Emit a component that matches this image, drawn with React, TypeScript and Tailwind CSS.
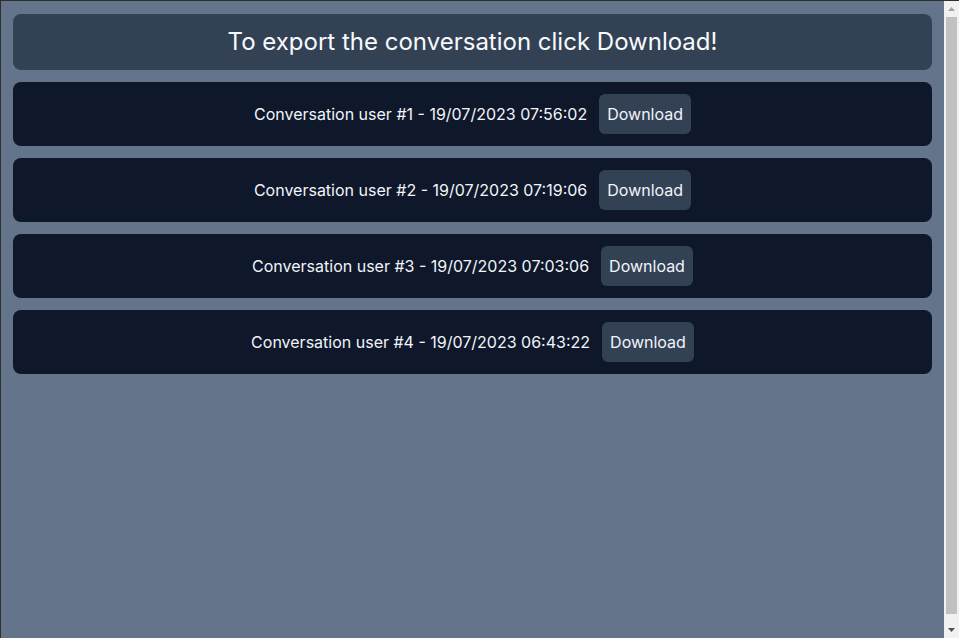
import React from "react";

const rows = [
  "Conversation user #1 - 19/07/2023 07:56:02",
  "Conversation user #2 - 19/07/2023 07:19:06",
  "Conversation user #3 - 19/07/2023 07:03:06",
  "Conversation user #4 - 19/07/2023 06:43:22",
];

export default function App() {
  return (
    <div
      className="flex h-[638px] border-t border-l border-[#2f2f2f] text-[#f1f5f9] overflow-hidden"
      style={{ fontFamily: "Inter, 'Noto Sans', sans-serif" }}
    >
      <div className="flex-1 bg-[#64748b]">
        <div className="flex flex-col gap-3 pt-[13px] px-3 pb-3">
          <div className="rounded-lg bg-[#334155] py-3 text-center text-2xl text-[#f8fafc]">
            To export the conversation click Download!
          </div>
          {rows.map((r) => (
            <div
              key={r}
              className="flex items-center justify-center gap-3 rounded-lg bg-[#0f172a] py-3 text-base"
            >
              <span>{r}</span>
              <button className="rounded-md bg-[#334155] px-2 py-2 leading-6">
                Download
              </button>
            </div>
          ))}
        </div>
      </div>
      <div className="flex w-[15px] flex-col bg-[#f1f1f1]">
        <div className="flex h-[16px] items-center justify-center">
          <svg width="7" height="4" viewBox="0 0 7 4">
            <polygon points="0,4 7,4 3.5,0" fill="#a3a3a3" />
          </svg>
        </div>
        <div className="flex flex-1 justify-center pb-[8px]">
          <div className="w-[11px] bg-[#c1c1c1]" />
        </div>
        <div className="flex h-[16px] items-center justify-center">
          <svg width="7" height="4" viewBox="0 0 7 4">
            <polygon points="0,0 7,0 3.5,4" fill="#505050" />
          </svg>
        </div>
      </div>
    </div>
  );
}
